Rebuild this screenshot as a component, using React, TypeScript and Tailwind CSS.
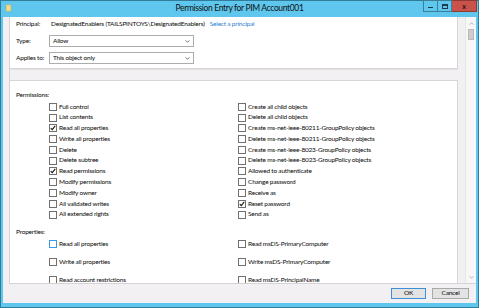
import React from 'react';

const FONT = { fontFamily: 'Lato, "Noto Sans", "Liberation Sans", sans-serif' };

const T = 'text-[6.5px] leading-none tracking-[-0.2px] text-[#0a0a0a] whitespace-nowrap';

function Box({ checked = false, focus = false }: { checked?: boolean; focus?: boolean }) {
  return (
    <span
      className={`relative inline-block w-[8px] h-[8px] shrink-0 border bg-white ${focus ? 'border-[#3c9be0]' : 'border-[#707070]'}`}
    >
      {checked && (
        <svg viewBox="0 0 8 8" className="absolute left-[0px] top-[0px] w-[6px] h-[6px]">
          <path d="M1 4.2 L3 6.2 L7 1.2" stroke="#111" strokeWidth="1.4" fill="none" />
        </svg>
      )}
    </span>
  );
}

function Row({ label, checked, focus, h }: { label: string; checked?: boolean; focus?: boolean; h: string }) {
  return (
    <div className={`flex items-center gap-[2px] ${h}`}>
      <Box checked={checked} focus={focus} />
      <span className={T}>{label}</span>
    </div>
  );
}

function Select({ value }: { value: string }) {
  return (
    <div className="flex items-center justify-between w-[145px] h-[12px] border border-[#acacac] bg-white pl-[3px] pr-[3px]">
      <span className={T}>{value}</span>
      <svg viewBox="0 0 6 4" className="w-[5px] h-[3px]">
        <path d="M0.5 0.5 L3 3 L5.5 0.5" stroke="#444" strokeWidth="1" fill="none" />
      </svg>
    </div>
  );
}

const permsLeft: [string, boolean][] = [
  ['Full control', false],
  ['List contents', false],
  ['Read all properties', true],
  ['Write all properties', false],
  ['Delete', false],
  ['Delete subtree', false],
  ['Read permissions', true],
  ['Modify permissions', false],
  ['Modify owner', false],
  ['All validated writes', false],
  ['All extended rights', false],
];

const permsRight: [string, boolean][] = [
  ['Create all child objects', false],
  ['Delete all child objects', false],
  ['Create ms-net-ieee-80211-GroupPolicy objects', false],
  ['Delete ms-net-ieee-80211-GroupPolicy objects', false],
  ['Create ms-net-ieee-8023-GroupPolicy objects', false],
  ['Delete ms-net-ieee-8023-GroupPolicy objects', false],
  ['Allowed to authenticate', false],
  ['Change password', false],
  ['Receive as', false],
  ['Reset password', true],
  ['Send as', false],
];

const propsLeft = ['Read all properties', 'Write all properties', 'Read account restrictions'];
const propsRight = ['Read msDS-PrimaryComputer', 'Write msDS-PrimaryComputer', 'Read msDS-PrincipalName'];

export default function App() {
  return (
    <div className="w-[479px] h-[308px] flex flex-col bg-[#5fc7ee] border border-[#2f7d99]" style={FONT}>
      {/* title bar */}
      <div className="relative h-[16px] shrink-0 flex items-center justify-center">
        <svg viewBox="0 0 6 8" className="absolute left-[5px] top-[3px] w-[5px] h-[8px]">
          <rect x="0" y="0" width="6" height="8" fill="#e8c45a" />
          <rect x="1" y="1" width="4" height="6" fill="#f6dc86" />
        </svg>
        <span className="text-[8.5px] leading-none tracking-[-0.35px] text-[#111] mt-[-1px]">Permission Entry for PIM Account001</span>
        <div className="absolute right-[1px] top-[-1px] flex h-[12px]">
          <div className="w-[15px] h-full border border-[#3b7f99] flex items-end justify-center pb-[3px]">
            <div className="w-[5px] h-[1.5px] bg-[#1d3b48]" />
          </div>
          <div className="w-[14px] h-full border border-l-0 border-[#3b7f99] flex items-center justify-center">
            <div className="w-[6px] h-[5px] border border-t-2 border-[#1d3b48]" />
          </div>
          <div className="w-[25px] h-full bg-[#c9524b] border border-l-0 border-[#8f3a35] flex items-center justify-center">
            <span className="text-[7px] leading-none font-bold text-[#2a0f0d]">x</span>
          </div>
        </div>
      </div>

      {/* body */}
      <div className="flex-1 ml-[2px] mr-[2px] mb-[4px] flex flex-col bg-[#f3f0f3]">
        <div className="flex h-[267px] ml-[6px] border-l border-b border-[#d5d1d5]">
          <div className="flex-1 flex flex-col overflow-hidden">
            {/* principal panel */}
            <div className="h-[52px] shrink-0 bg-white border-b border-r border-[#d6d6d6] shadow-[0_1px_0_#e4e0e4] pl-[6px] pt-[2px]">
              <div className="flex items-center h-[11px]">
                <span className={`w-[35px] ${T}`}>Principal:</span>
                <span className={T}>DesignatedEnablers (TAILSPINTOYS\DesignatedEnablers)</span>
                <span className={`ml-[5px] ${T} text-[#2f7fd1]`}>Select a principal</span>
              </div>
              <div className="flex items-center mt-[5px]">
                <span className={`w-[33px] ${T}`}>Type:</span>
                <Select value="Allow" />
              </div>
              <div className="flex items-center mt-[5px]">
                <span className={`w-[33px] ${T}`}>Applies to:</span>
                <Select value="This object only" />
              </div>
            </div>

            {/* permissions panel */}
            <div className="mt-[11px] flex-1 bg-white border-t border-r border-[#d6d6d6] pl-[6px] pt-[9px]">
              <div className={`h-[10px] flex items-center ${T}`}>Permissions:</div>
              <div className="flex mt-[1.5px]">
                <div className="ml-[33px] w-[189px] flex flex-col">
                  {permsLeft.map(([l, c]) => (
                    <Row key={l} label={l} checked={c} h="h-[10.77px]" />
                  ))}
                </div>
                <div className="flex flex-col">
                  {permsRight.map(([l, c]) => (
                    <Row key={l} label={l} checked={c} h="h-[10.77px]" />
                  ))}
                </div>
              </div>
              <div className={`h-[10px] mt-[7px] flex items-center ${T}`}>Properties:</div>
              <div className="flex mt-[2px]">
                <div className="ml-[33px] w-[189px] flex flex-col gap-[7px]">
                  {propsLeft.map((l, i) => (
                    <Row key={l} label={l} focus={i === 0} h="h-[11px]" />
                  ))}
                </div>
                <div className="flex flex-col gap-[7px]">
                  {propsRight.map((l) => (
                    <Row key={l} label={l} h="h-[11px]" />
                  ))}
                </div>
              </div>
            </div>
          </div>

          {/* scrollbar */}
          <div className="w-[18px] shrink-0 flex justify-end">
            <div className="w-[11px] flex flex-col items-center bg-[#f7f7f7] border-l border-[#e6e6e6]">
              <svg viewBox="0 0 6 4" className="w-[5px] h-[3px] mt-[5px]">
                <path d="M0.5 3.5 L3 1 L5.5 3.5" stroke="#9a9a9a" strokeWidth="1" fill="none" />
              </svg>
              <div className="w-[6px] h-[11px] mt-[4px] bg-[#cdcdcd] border border-[#b9b9b9]" />
              <div className="flex-1" />
              <svg viewBox="0 0 6 4" className="w-[5px] h-[3px] mb-[4px]">
                <path d="M0.5 0.5 L3 3 L5.5 0.5" stroke="#9a9a9a" strokeWidth="1" fill="none" />
              </svg>
            </div>
          </div>
        </div>

        {/* bottom buttons */}
        <div className="flex-1 flex items-center justify-end gap-[6px] pr-[7px]">
          <div className={`w-[35px] h-[11px] flex items-center justify-center bg-[#e3e3e3] border border-[#3c8fd6] ${T}`}>OK</div>
          <div className={`w-[37px] h-[11px] flex items-center justify-center bg-[#e3e3e3] border border-[#a9a9a9] ${T}`}>Cancel</div>
        </div>
      </div>
    </div>
  );
}
